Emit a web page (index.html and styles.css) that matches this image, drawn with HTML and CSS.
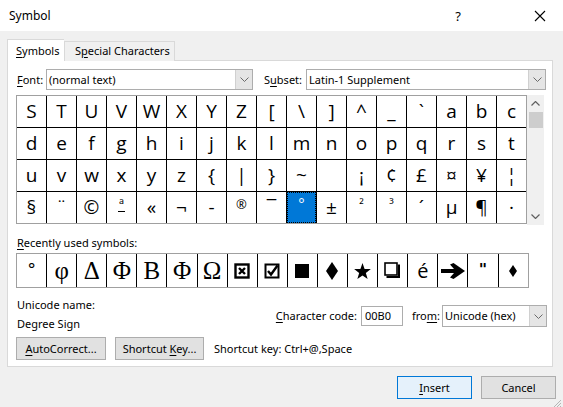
FILE: index.html
```html
<!DOCTYPE html>
<html>
<head>
<meta charset="utf-8">
<link rel="stylesheet" href="styles.css">
</head>
<body>
<div class="dialog">
  <div class="titlebar">
    <span class="title">Symbol</span>
    <span class="help">?</span>
    <span class="close"><svg width="12" height="12" viewBox="0 0 12 12"><path d="M1 1 L11 11 M11 1 L1 11" stroke="#000" stroke-width="1.1" fill="none"/></svg></span>
  </div>
  <div class="body">
    <div class="tabs">
      <div class="tab active"><span><u>S</u>ymbols</span></div>
      <div class="tab"><span>S<u>p</u>ecial Characters</span></div>
    </div>
    <div class="panel">
      <div class="font-row">
        <span class="lbl lbl-font"><u>F</u>ont:</span>
        <div class="select sel-font"><span class="sel-text">(normal text)</span><span class="sel-btn"><svg width="9" height="5" viewBox="0 0 9 5"><polyline points="0.5,0.5 4.5,4.5 8.5,0.5" fill="none" stroke="#6a6a6a" stroke-width="1"/></svg></span></div>
        <span class="lbl lbl-subset">S<u>u</u>bset:</span>
        <div class="select sel-subset"><span class="sel-text">Latin-1 Supplement</span><span class="sel-btn"><svg width="9" height="5" viewBox="0 0 9 5"><polyline points="0.5,0.5 4.5,4.5 8.5,0.5" fill="none" stroke="#6a6a6a" stroke-width="1"/></svg></span></div>
      </div>
      <div class="grid-wrap">
        <div class="grid">
          <div class="cell">S</div><div class="cell">T</div><div class="cell">U</div><div class="cell">V</div><div class="cell">W</div><div class="cell">X</div><div class="cell">Y</div><div class="cell">Z</div><div class="cell">[</div><div class="cell">\</div><div class="cell">]</div><div class="cell">^</div><div class="cell">_</div><div class="cell">`</div><div class="cell">a</div><div class="cell">b</div><div class="cell">c</div>
          <div class="cell">d</div><div class="cell">e</div><div class="cell">f</div><div class="cell">g</div><div class="cell">h</div><div class="cell">i</div><div class="cell">j</div><div class="cell">k</div><div class="cell">l</div><div class="cell">m</div><div class="cell">n</div><div class="cell">o</div><div class="cell">p</div><div class="cell">q</div><div class="cell">r</div><div class="cell">s</div><div class="cell">t</div>
          <div class="cell">u</div><div class="cell">v</div><div class="cell">w</div><div class="cell">x</div><div class="cell">y</div><div class="cell">z</div><div class="cell">{</div><div class="cell">|</div><div class="cell">}</div><div class="cell">~</div><div class="cell"></div><div class="cell">¡</div><div class="cell">¢</div><div class="cell">£</div><div class="cell">¤</div><div class="cell">¥</div><div class="cell">¦</div>
          <div class="cell">§</div><div class="cell">¨</div><div class="cell">©</div><div class="cell"><span class="ordf">ª</span></div><div class="cell">«</div><div class="cell">¬</div><div class="cell">-</div><div class="cell small">®</div><div class="cell">¯</div><div class="cell selected"><span>°</span></div><div class="cell">±</div><div class="cell small">²</div><div class="cell small">³</div><div class="cell">´</div><div class="cell">µ</div><div class="cell">¶</div><div class="cell">·</div>
        </div>
        <div class="scrollbar">
          <svg class="sb-arrow" width="9" height="5" viewBox="0 0 9 5"><polyline points="0.5,4.5 4.5,0.5 8.5,4.5" fill="none" stroke="#606060" stroke-width="1.2"/></svg>
          <div class="sb-thumb"></div>
          <div class="sb-space"></div>
          <svg class="sb-arrow" width="9" height="5" viewBox="0 0 9 5"><polyline points="0.5,0.5 4.5,4.5 8.5,0.5" fill="none" stroke="#606060" stroke-width="1.2"/></svg>
        </div>
      </div>
      <div class="lbl recent-lbl"><u>R</u>ecently used symbols:</div>
      <div class="recent">
        <div class="rc deg">°</div>
        <div class="rc serif">φ</div>
        <div class="rc serif">Δ</div>
        <div class="rc serif">Φ</div>
        <div class="rc serif">Β</div>
        <div class="rc serif">Φ</div>
        <div class="rc serif">Ω</div>
        <div class="rc"><svg width="16" height="16" viewBox="0 0 16 16"><rect x="1.5" y="1.5" width="13" height="13" fill="none" stroke="#000" stroke-width="2.4"/><path d="M5 5 L11 11 M11 5 L5 11" stroke="#000" stroke-width="2.4"/></svg></div>
        <div class="rc"><svg width="16" height="16" viewBox="0 0 16 16"><rect x="1.5" y="1.5" width="13" height="13" fill="none" stroke="#000" stroke-width="2"/><path d="M4 8 L7 11.5 L13.5 2.5" stroke="#000" stroke-width="2.4" fill="none"/></svg></div>
        <div class="rc"><svg width="14" height="14" viewBox="0 0 14 14"><rect x="0" y="0" width="14" height="14" fill="#000"/></svg></div>
        <div class="rc"><svg width="12" height="18" viewBox="0 0 12 18"><polygon points="6,0 12,9 6,18 0,9" fill="#000"/></svg></div>
        <div class="rc"><svg width="17" height="16" viewBox="0 0 24 23"><polygon points="12,0 15,8.5 24,8.7 16.8,14.2 19.4,23 12,17.8 4.6,23 7.2,14.2 0,8.7 9,8.5" fill="#000"/></svg></div>
        <div class="rc"><svg width="17" height="17" viewBox="0 0 17 17"><rect x="1" y="1" width="12" height="12" fill="none" stroke="#000" stroke-width="1.6"/><path d="M13.8 2.5 V14 H2.5 V16 H16 V2.5 Z" fill="#000"/></svg></div>
        <div class="rc eacute">é</div>
        <div class="rc"><svg width="24" height="16" viewBox="0 0 24 16"><path d="M0 6 H13 L9 1.5 L12.5 0 L24 8 L12.5 16 L9 14.5 L13 10 H0 Z" fill="#000"/></svg></div>
        <div class="rc quote">"</div>
        <div class="rc"><svg width="8" height="12" viewBox="0 0 8 12"><polygon points="4,0 8,6 4,12 0,6" fill="#000"/></svg></div>
      </div>
      <div class="info">
        <div class="names">
          <div class="lbl">Unicode name:</div>
          <div class="lbl">Degree Sign</div>
        </div>
        <div class="code">
          <span class="lbl"><u>C</u>haracter code:</span>
          <div class="input">00B0</div>
          <span class="lbl from">fro<u>m</u>:</span>
          <div class="select sel-from"><span class="sel-text">Unicode (hex)</span><span class="sel-btn"><svg width="9" height="5" viewBox="0 0 9 5"><polyline points="0.5,0.5 4.5,4.5 8.5,0.5" fill="none" stroke="#6a6a6a" stroke-width="1"/></svg></span></div>
        </div>
      </div>
      <div class="btn-row">
        <div class="btn btn-auto"><span><u>A</u>utoCorrect...</span></div>
        <div class="btn btn-short"><span>Shortcut <u>K</u>ey...</span></div>
        <span class="lbl shortcut-text">Shortcut key: Ctrl+@,Space</span>
      </div>
    </div>
    <div class="footer">
      <div class="btn btn-insert"><span><u>I</u>nsert</span></div>
      <div class="btn btn-cancel"><span>Cancel</span></div>
    </div>
    <div class="grip"><svg width="10" height="10" viewBox="0 0 10 10"><path d="M9 2 L2 9 M9 5 L5 9 M9 8 L8 9" stroke="#b5b5b5" stroke-width="1"/></svg></div>
  </div>
</div>
</body>
</html>
```

FILE: styles.css
```css
* { box-sizing: border-box; }
html, body { margin: 0; padding: 0; }
body {
  width: 563px;
  height: 407px;
  overflow: hidden;
  font-family: "Noto Sans", "Open Sans", sans-serif;
  font-size: 11px;
  color: #000;
  background: #f0f0f0;
}
u { text-decoration: underline; text-underline-offset: 2px; text-decoration-thickness: 1px; }
.dialog { width: 563px; height: 407px; display: flex; flex-direction: column; }
.titlebar {
  height: 31px;
  background: #fff;
  display: flex;
  align-items: center;
  padding-left: 9px;
}
.title { flex: 1; font-size: 12px; }
.help { width: 20px; text-align: center; margin-right: 66px; font-size: 13px; }
.close { width: 12px; height: 12px; margin-right: 17px; display: flex; }
.body { flex: 1; position: relative; padding: 7px 10px 0 7px; }
.tabs { display: flex; align-items: flex-end; height: 23px; position: relative; z-index: 1; }
.tab {
  height: 20px;
  line-height: 18px;
  background: #f0f0f0;
  border: 1px solid #d9d9d9;
  border-bottom: none;
  padding: 0 0 0 10px;
  width: 111px;
  white-space: nowrap;
}
.tab.active {
  height: 23px;
  line-height: 22px;
  background: #fff;
  width: 57px;
  padding-left: 8px;
  border-right: none;
  margin-bottom: -1px;
}
.panel {
  height: 307px;
  margin-top: -1px;
  border: 1px solid #d9d9d9;
  background: #fff;
  padding: 8px 5px 0 8px;
}
.lbl { line-height: 16px; white-space: nowrap; }
.font-row { display: flex; align-items: center; height: 21px; }
.lbl-font { width: 30px; padding-left: 1px; }
.lbl-subset { width: 53px; padding-left: 11px; }
.select {
  height: 21px;
  border: 1px solid #adadad;
  display: flex;
  align-items: stretch;
  background: #fff;
}
.sel-text { flex: 1; padding-left: 2px; line-height: 19px; white-space: nowrap; }
.sel-btn {
  width: 17px;
  background: #e5e5e5;
  border-left: 1px solid #d0d0d0;
  display: flex;
  align-items: center;
  justify-content: center;
}
.sel-font { width: 207px; }
.sel-subset { width: 240px; }
.grid-wrap { display: flex; margin-top: 5px; height: 130px; }
.grid {
  display: grid;
  grid-template-columns: repeat(17, 29px);
  grid-auto-rows: 31px;
  gap: 1px;
  background: #000;
  border: 1px solid #a0a0a0;
  width: 511px;
  height: 129px;
}
.cell {
  background: #fff;
  display: flex;
  align-items: center;
  justify-content: center;
  font-family: "Open Sans", "Noto Sans", sans-serif;
  font-size: 19px;
  line-height: 1;
}
.ordf { font-size: 14px; border-bottom: 1.5px solid #000; line-height: 12px; padding: 0 1px; margin-top: -4px; }
.cell.small { font-size: 13px; align-items: flex-start; padding-top: 6px; }
.cell.selected {
  background: #0078d7;
  color: #fff;
  outline: 1px dotted #000;
  outline-offset: -1px;
  align-items: flex-start;
  padding-top: 4px;
  font-size: 15px;
}
.scrollbar {
  width: 17px;
  height: 130px;
  background: #f0f0f0;
  display: flex;
  flex-direction: column;
  align-items: center;
  padding: 6px 0 6px;
}
.sb-arrow { flex: none; }
.sb-thumb { width: 14px; height: 16px; background: #cdcdcd; margin-top: 6px; }
.sb-space { flex: 1; }
.recent-lbl { margin-top: 10px; padding-left: 1px; }
.recent {
  margin-top: 2px;
  display: grid;
  grid-template-columns: repeat(17, 29.1px);
  grid-auto-rows: 33px;
  gap: 1px;
  background: #000;
  border: 1px solid #a0a0a0;
  width: 513px;
  height: 35px;
}
.rc {
  background: #fff;
  display: flex;
  align-items: center;
  justify-content: center;
  font-size: 22px;
}
.rc.serif { font-family: "Liberation Serif", serif; font-size: 25px; }
.rc.deg { font-size: 17px; align-items: flex-start; padding-top: 3px; }
.rc.eacute { font-family: "Open Sans", sans-serif; font-size: 20px; }
.rc.quote { font-family: "DejaVu Sans", sans-serif; font-size: 16px; align-items: flex-start; padding-top: 6px; font-weight: bold; }
.info { display: flex; justify-content: space-between; margin-top: 9px; height: 35px; }
.names { padding-left: 1px; display: flex; flex-direction: column; gap: 3px; }
.code { display: flex; align-items: flex-start; padding-top: 8px; }
.code .lbl { line-height: 22px; }
.input {
  width: 42px;
  height: 20px;
  margin: 1px 9px 0 4px;
  border: 1px solid #adadad;
  line-height: 18px;
  padding-left: 3px;
}
.from { width: 30px; }
.sel-from { width: 105px; height: 22px; }
.sel-from .sel-text { line-height: 20px; }
.btn-row { display: flex; align-items: center; margin-top: 5px; }
.btn {
  height: 23px;
  border: 1px solid #adadad;
  background: #e1e1e1;
  display: flex;
  align-items: center;
  justify-content: center;
  white-space: nowrap;
}
.btn-auto { width: 90px; }
.btn-short { width: 89px; margin-left: 9px; }
.shortcut-text { margin-left: 10px; }
.footer { display: flex; justify-content: flex-end; gap: 9px; margin-top: 9px; margin-right: -3px; }
.btn-insert { width: 75px; background: #e5f1fb; border-color: #0078d7; }
.btn-cancel { width: 75px; }
.grip { position: absolute; right: 1px; bottom: 1px; width: 10px; height: 10px; }
```
